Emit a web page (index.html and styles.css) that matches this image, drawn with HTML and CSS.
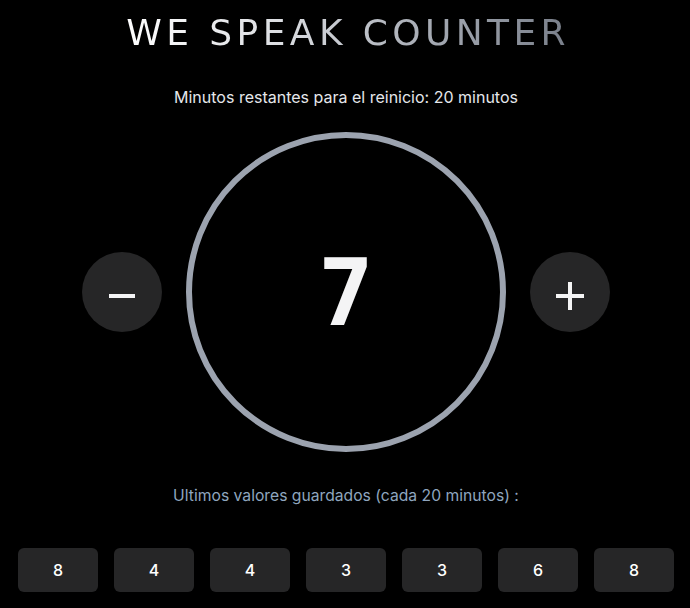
FILE: index.html
```html
<!DOCTYPE html>
<html lang="es">
<head>
<meta charset="utf-8">
<title>We Speak Counter</title>
<link rel="stylesheet" href="styles.css">
</head>
<body>
<main class="app">
  <h1 class="title">WE SPEAK COUNTER</h1>
  <p class="remaining">Minutos restantes para el reinicio: 20 minutos</p>
  <section class="counter-row">
    <button class="round-btn" aria-label="Restar">
      <svg class="btn-icon" width="30" height="30" viewBox="0 0 30 30"><rect x="2" y="13" width="26" height="4" fill="#f4f4f5"/></svg>
    </button>
    <div class="dial"><span class="count">7</span></div>
    <button class="round-btn" aria-label="Sumar">
      <svg class="btn-icon" width="30" height="30" viewBox="0 0 30 30"><rect x="1" y="13" width="28" height="4" fill="#f4f4f5"/><rect x="13" y="1" width="4" height="28" fill="#f4f4f5"/></svg>
    </button>
  </section>
  <p class="history-label">Ultimos valores guardados (cada 20 minutos) :</p>
  <ul class="history">
    <li class="chip">8</li>
    <li class="chip">4</li>
    <li class="chip">4</li>
    <li class="chip">3</li>
    <li class="chip">3</li>
    <li class="chip">6</li>
    <li class="chip">8</li>
  </ul>
</main>
</body>
</html>
```
FILE: styles.css
```css
html, body {
  margin: 0;
  padding: 0;
  background: #000;
}
body {
  font-family: Inter, "Noto Sans", "Liberation Sans", sans-serif;
  color: #e5e7eb;
}
.app {
  display: flex;
  flex-direction: column;
  align-items: center;
  padding-left: 2px;
}
.title {
  margin: 11px 0 0;
  font-family: "DejaVu Sans", "Liberation Sans", sans-serif;
  font-weight: 400;
  font-size: 36px;
  line-height: 44px;
  letter-spacing: 4.4px;
  text-indent: 4.4px;
  background: linear-gradient(90deg, #ffffff 0%, #dcdee2 35%, #a3a8b1 70%, #787e89 100%);
  -webkit-background-clip: text;
  background-clip: text;
  color: transparent;
}
.remaining {
  margin: 32px 0 0;
  font-size: 16px;
  line-height: 20px;
  color: #e5e7eb;
}
.counter-row {
  margin-top: 25px;
  display: flex;
  align-items: center;
  gap: 24px;
}
.round-btn {
  width: 80px;
  height: 80px;
  border-radius: 50%;
  border: none;
  background: #262627;
  padding: 0;
  display: flex;
  align-items: center;
  justify-content: center;
}
.btn-icon {
  margin-top: 8px;
}
.dial {
  width: 320px;
  height: 320px;
  box-sizing: border-box;
  border: 6px solid #9ca3af;
  border-radius: 50%;
  display: flex;
  align-items: center;
  justify-content: center;
}
.count {
  font-family: "DejaVu Sans Mono", "Liberation Mono", monospace;
  font-size: 92px;
  font-weight: 700;
  line-height: 1;
  color: #f4f4f5;
  margin-top: 4px;
}
.history-label {
  margin: 34px 0 0;
  font-size: 15.7px;
  line-height: 20px;
  color: #8fa6bf;
}
.history {
  list-style: none;
  margin: 42px 0 0;
  padding: 0;
  display: flex;
  gap: 16px;
}
.chip {
  width: 80px;
  height: 44px;
  border-radius: 6px;
  background: #262627;
  color: #ffffff;
  font-size: 16px;
  font-weight: 500;
  display: flex;
  align-items: center;
  justify-content: center;
}
```
